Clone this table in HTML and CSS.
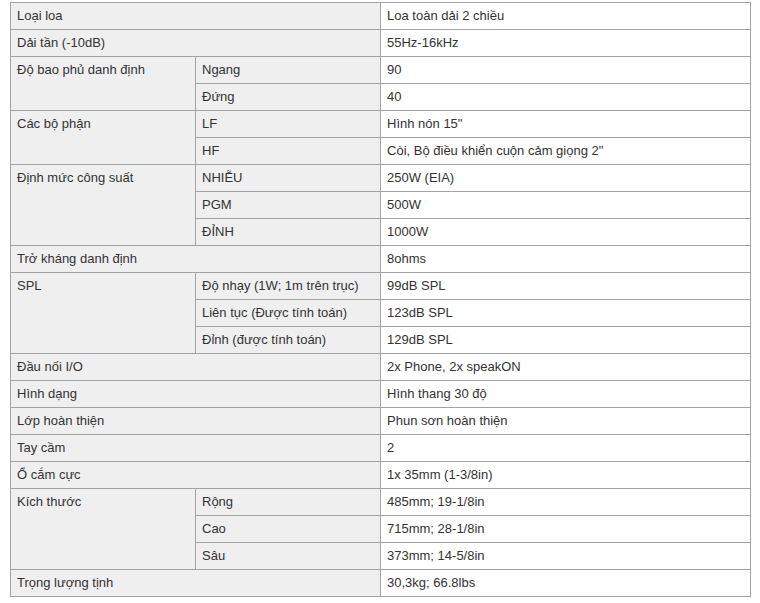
FILE: index.html
```html
<!DOCTYPE html>
<html lang="vi">
<head>
<meta charset="utf-8">
<title>Thông số kỹ thuật</title>
<link rel="stylesheet" href="styles.css">
</head>
<body>
<table class="spec">
  <colgroup><col class="c1"><col class="c2"><col class="c3"></colgroup>
  <tbody>
    <tr><td class="k" colspan="2">Loại loa</td><td class="v">Loa toàn dải 2 chiều</td></tr>
    <tr><td class="k" colspan="2">Dải tần (-10dB)</td><td class="v">55Hz-16kHz</td></tr>
    <tr><td class="k" rowspan="2">Độ bao phủ danh định</td><td class="k">Ngang</td><td class="v">90</td></tr>
    <tr><td class="k">Đứng</td><td class="v">40</td></tr>
    <tr><td class="k" rowspan="2">Các bộ phận</td><td class="k">LF</td><td class="v">Hình nón 15"</td></tr>
    <tr><td class="k">HF</td><td class="v">Còi, Bộ điều khiển cuộn cảm giọng 2"</td></tr>
    <tr><td class="k" rowspan="3">Định mức công suất</td><td class="k">NHIỄU</td><td class="v">250W (EIA)</td></tr>
    <tr><td class="k">PGM</td><td class="v">500W</td></tr>
    <tr><td class="k">ĐỈNH</td><td class="v">1000W</td></tr>
    <tr><td class="k" colspan="2">Trở kháng danh định</td><td class="v">8ohms</td></tr>
    <tr><td class="k" rowspan="3">SPL</td><td class="k">Độ nhạy (1W; 1m trên trục)</td><td class="v">99dB SPL</td></tr>
    <tr><td class="k">Liên tục (Được tính toán)</td><td class="v">123dB SPL</td></tr>
    <tr><td class="k">Đỉnh (được tính toán)</td><td class="v">129dB SPL</td></tr>
    <tr><td class="k" colspan="2">Đầu nối I/O</td><td class="v">2x Phone, 2x speakON</td></tr>
    <tr><td class="k" colspan="2">Hình dạng</td><td class="v">Hình thang 30 độ</td></tr>
    <tr><td class="k" colspan="2">Lớp hoàn thiện</td><td class="v">Phun sơn hoàn thiện</td></tr>
    <tr><td class="k" colspan="2">Tay cầm</td><td class="v">2</td></tr>
    <tr><td class="k" colspan="2">Ổ cắm cực</td><td class="v">1x 35mm (1-3/8in)</td></tr>
    <tr><td class="k" rowspan="3">Kích thước</td><td class="k">Rộng</td><td class="v">485mm; 19-1/8in</td></tr>
    <tr><td class="k">Cao</td><td class="v">715mm; 28-1/8in</td></tr>
    <tr><td class="k">Sâu</td><td class="v">373mm; 14-5/8in</td></tr>
    <tr><td class="k" colspan="2">Trọng lượng tịnh</td><td class="v">30,3kg; 66.8lbs</td></tr>
  </tbody>
</table>
</body>
</html>
```
FILE: styles.css
```css
html, body {
  margin: 0;
  background: #ffffff;
}
body {
  padding: 2px 10px;
  font-family: "Liberation Sans", Arial, sans-serif;
  font-size: 13px;
  color: #333333;
}
.spec {
  width: 740px;
  border-collapse: collapse;
  table-layout: fixed;
}
.c1 { width: 185px; }
.c2 { width: 185px; }
.c3 { width: 370px; }
.spec td {
  border: 1px solid #a3a3a3;
  padding: 5px 6px 5px 6px;
  height: 16px;
  line-height: 16px;
  vertical-align: top;
  text-align: left;
}
.spec td.k { background: #efefef; }
.spec td.v { background: #ffffff; }
```
